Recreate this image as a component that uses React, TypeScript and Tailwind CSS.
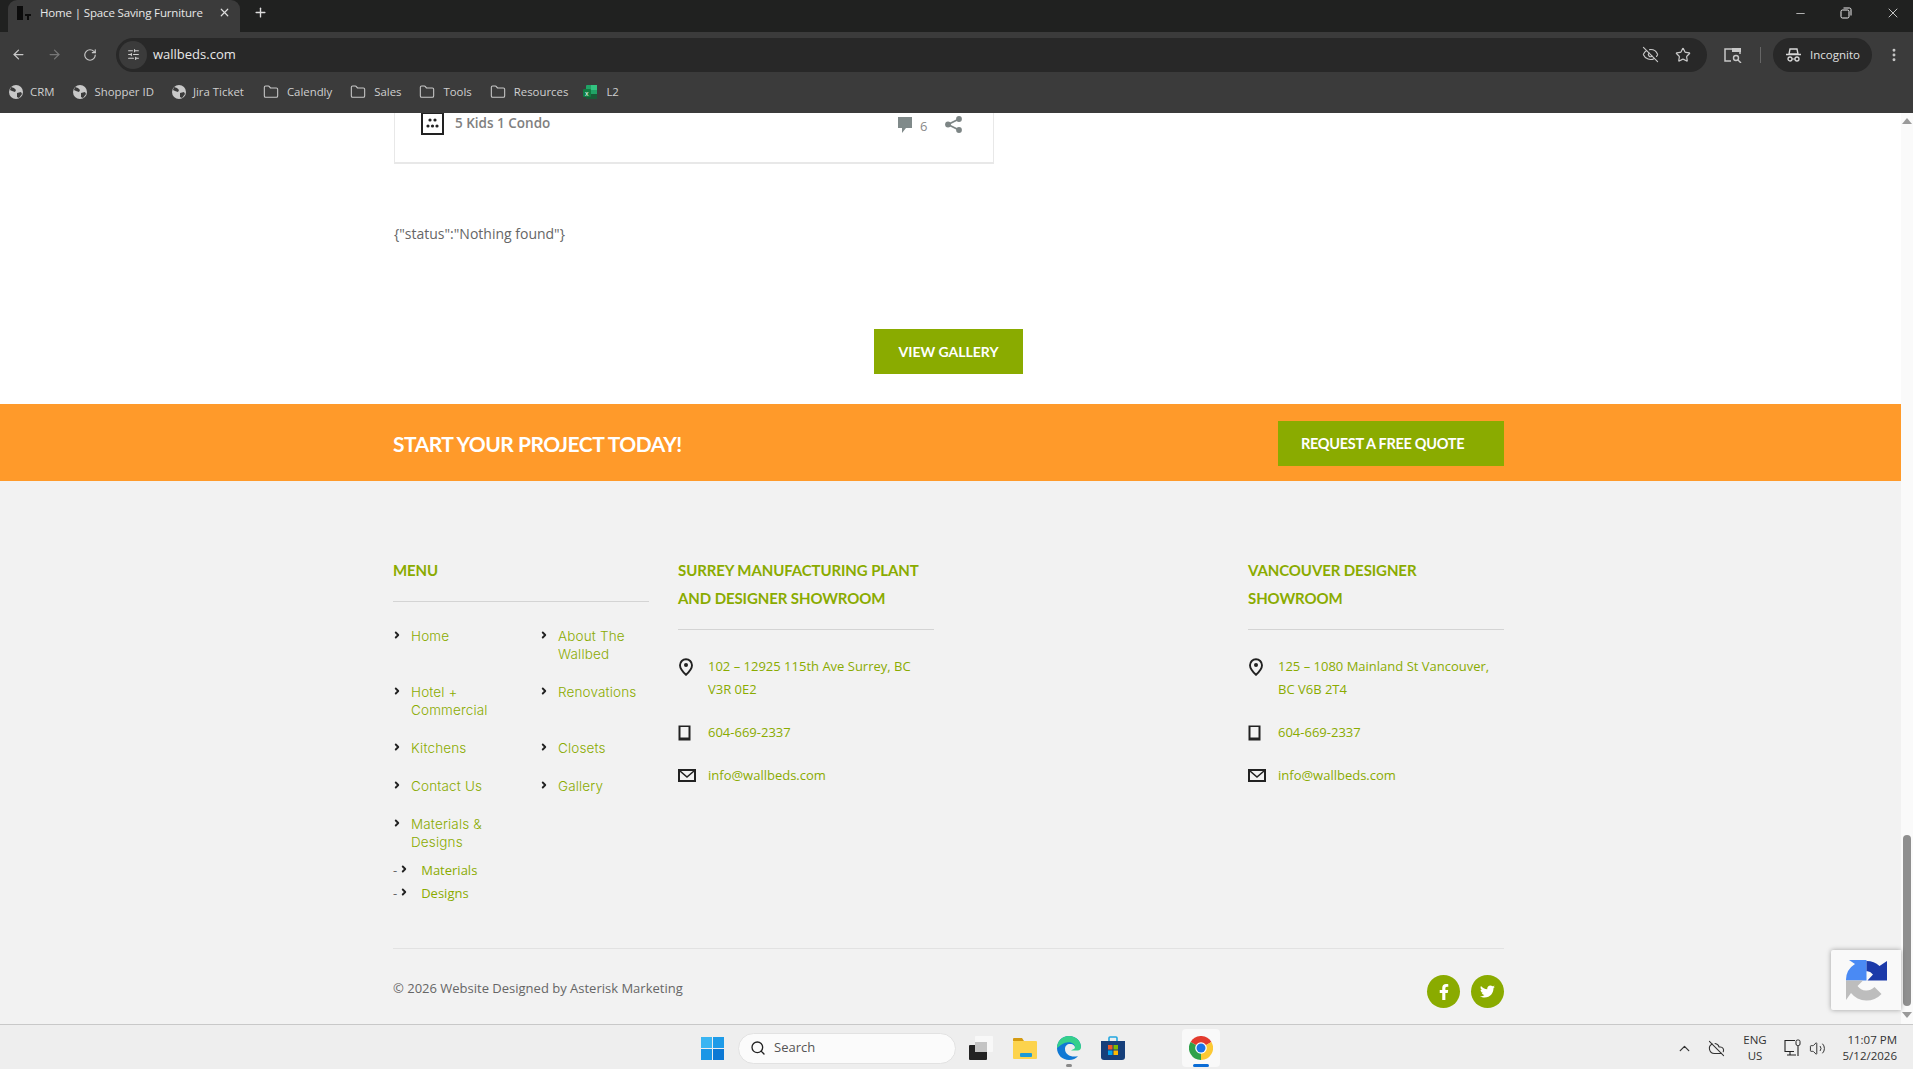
import React from "react";
import { ArrowLeft, ArrowRight, RotateCw, X, Plus, Minus, EyeOff, Star, MoreVertical, Search, ChevronUp, CloudOff, Volume2, Folder, ChevronRight, SlidersHorizontal } from "lucide-react";

const G = "text-[#8aab00]";

function Bookmark({ kind, label, gap }: { kind: "globe" | "folder" | "xl"; label: string; gap: number }) {
  return (
    <div className="flex items-center" style={{ marginRight: gap }}>
      {kind === "globe" && (
        <svg width="16" height="16" viewBox="0 0 16 16" className="mr-[6px]">
          <circle cx="8" cy="8" r="7" fill="#c8c8c8" />
          <path d="M3 3l3 1 2 2-1 2-3-1-2-1zM9 9l4-1 1 2-3 4-2-1z" fill="#3b3b3b" />
        </svg>
      )}
      {kind === "folder" && <Folder size={16} strokeWidth={1.6} className="mr-[8px] text-[#c8c8c8]" />}
      {kind === "xl" && (
        <svg width="14" height="16" viewBox="0 0 14 16" className="mr-[9px]">
          <rect x="3" y="1" width="11" height="14" rx="1" fill="#21a366" />
          <rect x="8" y="1" width="6" height="5" fill="#33c481" />
          <rect x="3" y="10" width="11" height="5" fill="#185c37" />
          <rect x="0" y="5" width="8" height="8" rx="1" fill="#107c41" />
          <text x="2" y="12" fontSize="7" fill="#fff" fontFamily="Liberation Sans">x</text>
        </svg>
      )}
      <span>{label}</span>
    </div>
  );
}

function MenuItem({ label, sub, h, w }: { label: string; sub?: boolean; h: number; w?: number }) {
  return (
    <li className="flex items-start" style={{ height: h }}>
      {sub && <span className="mr-[3px] text-[13px] leading-[18px] text-[#666]">-</span>}
      <ChevronRight size={10} strokeWidth={4.5} className="-ml-[1px] mt-[3px] shrink-0 text-[#222]" />
      <span
        className={`leading-[18px] ${sub ? "ml-[12px] text-[13px]" : "ml-[9px] text-[13.5px] font-light tracking-[0.15px]"} ${G}`}
        style={{ fontFamily: sub ? "'Open Sans', sans-serif" : "Inter, sans-serif", width: w }}
      >
        {label}
      </span>
    </li>
  );
}

function Contact({ address }: { address: React.ReactNode }) {
  return (
    <div className="mt-[25px] w-[256px]" style={{ fontFamily: "'Open Sans', sans-serif" }}>
      <div className="flex items-start">
        <div className="w-[30px] shrink-0">
          <svg width="16" height="18" viewBox="0 0 16 18" className="mt-[3px]">
            <path d="M8 1.200a6 6 0 0 0-6 6c0 4 6 9.600 6 9.600s6-5.600 6-9.600a6 6 0 0 0-6-6z" fill="none" stroke="#222" strokeWidth="1.9" />
            <circle cx="8" cy="7" r="2" fill="#222" />
          </svg>
        </div>
        <div className={`text-[13px] leading-[23px] ${G}`}>{address}</div>
      </div>
      <div className="mt-[20px] flex items-center">
        <div className="w-[30px] shrink-0">
          <svg width="13" height="16" viewBox="0 0 13 16" className="mt-[1px]">
            <rect x="0.500" y="0.500" width="12" height="15" fill="#222" />
            <rect x="2.500" y="2" width="8" height="10.500" fill="#f2f2f2" />
          </svg>
        </div>
        <span className={`text-[13px] leading-[23px] ${G}`}>604-669-2337</span>
      </div>
      <div className="mt-[20px] flex items-center">
        <div className="w-[30px] shrink-0">
          <svg width="18" height="13" viewBox="0 0 18 13">
            <rect x="1" y="1" width="16" height="11" fill="none" stroke="#222" strokeWidth="2" />
            <path d="M2 2l7 6 7-6" fill="none" stroke="#222" strokeWidth="1.600" />
          </svg>
        </div>
        <span className={`text-[13px] leading-[23px] ${G}`}>info@wallbeds.com</span>
      </div>
    </div>
  );
}

function Heading({ lines }: { lines: string[] }) {
  return (
    <div className="border-b border-[#d4d4d4] pb-[17px]">
      {lines.map((l) => (
        <div key={l} className={`text-[15px] font-bold leading-[28px] tracking-[-0.1px] ${G}`} style={{ fontFamily: "Lato, sans-serif" }}>{l}</div>
      ))}
    </div>
  );
}

export default function App() {
  return (
    <div className="relative flex h-screen w-full flex-col overflow-hidden bg-white" style={{ fontFamily: "'Open Sans', sans-serif" }}>
      {/* tab strip */}
      <div className="flex h-[32px] shrink-0 items-end bg-[#202120] text-white">
        <div className="ml-[8px] flex h-[32px] w-[232px] items-center rounded-t-[9px] bg-[#3b3b3b] pb-[7px] pl-[9px]">
          <svg width="14" height="16" viewBox="0 0 14 16">
            <rect x="0" y="1" width="6" height="14" fill="#0c0c0c" />
            <path d="M8 9h6v2h-2v4h-2v-4H8z" fill="#0c0c0c" />
          </svg>
          <span className="ml-[9px] w-[164px] whitespace-nowrap text-[11.5px] tracking-[-0.15px] text-[#e8e8e8]">Home | Space Saving Furniture</span>
          <X size={13} strokeWidth={2.2} className="ml-[14px] text-[#dddddd]" />
        </div>
        <Plus size={15} strokeWidth={2.2} className="mb-[12px] ml-[13px] text-[#dddddd]" />
        <div className="mb-[11px] ml-auto flex items-center">
          <Minus size={13} strokeWidth={1.2} className="mr-[33px] text-white" />
          <svg width="12" height="12" viewBox="0 0 12 12" className="mr-[33px]">
            <rect x="1" y="3" width="8" height="8" rx="1.500" fill="none" stroke="#eee" />
            <path d="M3.500 1h6a1.500 1.500 0 0 1 1.500 1.500v6" fill="none" stroke="#eee" />
          </svg>
          <X size={16} strokeWidth={1.1} className="mr-[12px] text-white" />
        </div>
      </div>

      {/* toolbar */}
      <div className="flex h-[40px] shrink-0 items-center bg-[#3b3b3b] pb-[1px] pt-[6px]">
        <ArrowLeft size={15} strokeWidth={2} className="ml-[11px] text-[#c8c8c8]" />
        <ArrowRight size={15} strokeWidth={2} className="ml-[21px] text-[#777]" />
        <RotateCw size={14} strokeWidth={2} className="ml-[21px] text-[#c8c8c8]" />
        <div className="ml-[19px] flex h-[34px] w-[1591px] items-center rounded-full bg-[#282828] pl-[3px]">
          <div className="flex h-[28px] w-[28px] items-center justify-center rounded-full bg-[#3b3b3b]">
            <SlidersHorizontal size={13} className="text-[#d0d0d0]" />
          </div>
          <span className="ml-[6px] text-[13px] text-[#e8e8e8]">wallbeds.com</span>
          <EyeOff size={17} strokeWidth={1.6} className="ml-auto text-[#c8c8c8]" />
          <Star size={16} strokeWidth={1.8} className="ml-[16px] mr-[16px] text-[#c8c8c8]" />
        </div>
        <svg width="18" height="16" viewBox="0 0 18 16" className="ml-[17px]">
          <path d="M7 14H1V2h15v5" fill="none" stroke="#c8c8c8" strokeWidth="1.500" />
          <rect x="8" y="1" width="9" height="4" fill="#c8c8c8" />
          <circle cx="12" cy="11" r="2.500" fill="none" stroke="#c8c8c8" strokeWidth="1.400" />
          <path d="M14 13l3 3" stroke="#c8c8c8" strokeWidth="1.400" />
        </svg>
        <div className="ml-[18px] h-[16px] w-[1px] bg-[#666]" />
        <div className="ml-[12px] flex h-[34px] w-[99px] items-center rounded-full bg-[#282828] pl-[13px]">
          <svg width="15" height="14" viewBox="0 0 15 14">
            <path d="M4 1h7l1 5H3zM0 6.500h15" fill="none" stroke="#d8d8d8" strokeWidth="1.400" />
            <circle cx="4" cy="11" r="2" fill="none" stroke="#d8d8d8" strokeWidth="1.300" />
            <circle cx="11" cy="11" r="2" fill="none" stroke="#d8d8d8" strokeWidth="1.300" />
            <path d="M6 11h3" stroke="#d8d8d8" />
          </svg>
          <span className="ml-[9px] text-[11.5px] text-[#e0e0e0]">Incognito</span>
        </div>
        <MoreVertical size={16} strokeWidth={2.4} className="ml-[14px] text-[#c8c8c8]" />
      </div>

      {/* bookmarks */}
      <div className="flex h-[41px] shrink-0 items-center bg-[#3b3b3b] pb-[1px] pl-[8px] text-[11.4px] text-[#cfcfcf]">
        <Bookmark kind="globe" label="CRM" gap={18} />
        <Bookmark kind="globe" label="Shopper ID" gap={17} />
        <Bookmark kind="globe" label="Jira Ticket" gap={19} />
        <Bookmark kind="folder" label="Calendly" gap={18} />
        <Bookmark kind="folder" label="Sales" gap={18} />
        <Bookmark kind="folder" label="Tools" gap={18} />
        <Bookmark kind="folder" label="Resources" gap={15} />
        <Bookmark kind="xl" label="L2" gap={0} />
      </div>

      {/* page */}
      <div className="flex min-h-0 flex-1">
        <main className="flex min-w-0 flex-1 flex-col">
          <div className="ml-[394px] h-[51px] w-[600px] shrink-0 border-x border-b-2 border-[#e8e8e8] pl-[26px]">
            <div className="flex items-start">
              <svg width="23" height="22" viewBox="0 0 23 22" className="shrink-0">
                <rect x="1" y="0" width="21" height="21" fill="#fff" stroke="#222" strokeWidth="2" />
                <g fill="#222">
                  <circle cx="9" cy="7" r="1.600" /><circle cx="14" cy="7" r="1.600" />
                  <circle cx="7" cy="13" r="1.600" /><circle cx="11.500" cy="13" r="1.600" /><circle cx="16" cy="13" r="1.600" />
                </g>
              </svg>
              <span className="ml-[11px] w-[98px] whitespace-nowrap text-[13.5px] font-semibold leading-[20px] text-[#808080]">5 Kids 1 Condo</span>
              <svg width="16" height="17" viewBox="0 0 16 17" className="ml-[344px] mt-[4px] shrink-0">
                <path d="M1 0h14v11H9l-4 5v-5H1z" fill="#808a8a" />
              </svg>
              <span className="ml-[7px] mt-[4px] text-[13px] leading-[18px] text-[#8a8a8a]">6</span>
              <svg width="17" height="17" viewBox="0 0 17 17" className="ml-[18px] mt-[3px] shrink-0">
                <g fill="#7d8585"><circle cx="14" cy="3" r="2.900" /><circle cx="3" cy="8.500" r="2.900" /><circle cx="14" cy="14" r="2.900" /></g>
                <path d="M14 3L3 8.500 14 14" fill="none" stroke="#7d8585" strokeWidth="1.800" />
              </svg>
            </div>
          </div>
          <div className="ml-[394px] mt-[60px] text-[14px] leading-[20px] text-[#666]">{'{"status":"Nothing found"}'}</div>
          <div className="ml-[874px] mt-[85px] flex h-[45px] w-[149px] items-center justify-center bg-[#8aab00] text-[14px] font-bold text-white" style={{ fontFamily: "Lato, sans-serif" }}>VIEW GALLERY</div>
          <div className="mt-[30px] flex h-[77px] shrink-0 items-center justify-between bg-[#ff9a2a] pl-[393px] pr-[397px] pt-[2px]" style={{ fontFamily: "Lato, sans-serif" }}>
            <span className="text-[21px] font-bold leading-[28px] tracking-[-0.5px] text-white">START YOUR PROJECT TODAY!</span>
            <div className="flex h-[45px] w-[226px] items-center bg-[#8aab00] pl-[23px] text-[14.5px] font-bold tracking-[-0.3px] text-white">REQUEST A FREE QUOTE</div>
          </div>
          <footer className="flex min-h-0 flex-1 flex-col bg-[#f2f2f2] pl-[393px]">
            <div className="mt-[75px] flex h-[392px] shrink-0 items-start">
              <div className="w-[256px]">
                <Heading lines={["MENU"]} />
                <div className="mt-[25px] flex">
                  <ul className="w-[147px] shrink-0">
                    <MenuItem label="Home" h={56} w={100} />
                    <MenuItem label="Hotel + Commercial" h={56} w={90} />
                    <MenuItem label="Kitchens" h={38} w={100} />
                    <MenuItem label="Contact Us" h={38} w={100} />
                    <MenuItem label="Materials & Designs" h={46} w={90} />
                    <MenuItem label="Materials" sub h={23} />
                    <MenuItem label="Designs" sub h={23} />
                  </ul>
                  <ul className="flex-1">
                    <MenuItem label="About The Wallbed" h={56} w={90} />
                    <MenuItem label="Renovations" h={56} />
                    <MenuItem label="Closets" h={38} />
                    <MenuItem label="Gallery" h={38} />
                  </ul>
                </div>
              </div>
              <div className="ml-[29px] w-[256px]">
                <Heading lines={["SURREY MANUFACTURING PLANT", "AND DESIGNER SHOWROOM"]} />
                <Contact address={<>102 – 12925 115th Ave Surrey, BC<br />V3R 0E2</>} />
              </div>
              <div className="ml-[314px] w-[256px]">
                <Heading lines={["VANCOUVER DESIGNER", "SHOWROOM"]} />
                <Contact address={<>125 – 1080 Mainland St Vancouver,<br />BC V6B 2T4</>} />
              </div>
            </div>
            <div className="w-[1111px] border-t border-[#e2e2e2]" />
            <div className="mt-[26px] flex w-[1111px] items-start">
              <span className="mt-[3px] text-[13px] leading-[20px] text-[#666]">© 2026 Website Designed by Asterisk Marketing</span>
              <div className="ml-auto flex gap-[11px]">
                <div className="flex h-[33px] w-[33px] items-center justify-center rounded-full bg-[#8aab00]">
                  <svg width="10" height="18" viewBox="0 0 320 512" fill="#fff"><path d="M279 288l14-93h-89v-60c0-25 12-50 52-50h41V6s-37-6-72-6c-73 0-121 44-121 125v70H23v93h81v224h100V288z" /></svg>
                </div>
                <div className="flex h-[33px] w-[33px] items-center justify-center rounded-full bg-[#8aab00]">
                  <svg width="17" height="15" viewBox="0 0 512 512" fill="#fff"><path d="M459 152c0 5 0 9 0 14 0 139-106 299-299 299-59 0-115-17-161-47 8 1 16 1 25 1 49 0 94-17 130-45-46-1-85-31-98-73 7 1 13 2 20 2 9 0 19-1 27-4-48-10-84-52-84-103v-1c14 8 30 13 47 13-28-19-47-51-47-87 0-20 5-37 14-53 52 63 129 105 216 109-2-8-3-16-3-24 0-58 47-105 105-105 30 0 58 13 77 33 24-5 47-14 67-26-8 25-25 46-46 59 21-2 42-8 60-16-14 21-32 39-53 54z" /></svg>
                </div>
              </div>
            </div>
          </footer>
        </main>
        {/* scrollbar */}
        <div className="flex w-[12px] shrink-0 flex-col items-center bg-[#fafafa]">
          <div className="mt-[5px] h-0 w-0 border-x-[5px] border-b-[6px] border-x-transparent border-b-[#9a9a9a]" />
          <div className="mt-[711px] h-[171px] w-[8px] rounded-full bg-[#8f8f8f]" />
          <div className="mt-[6px] h-0 w-0 border-x-[5px] border-t-[6px] border-x-transparent border-t-[#9a9a9a]" />
        </div>
      </div>

      {/* taskbar */}
      <div className="flex h-[45px] shrink-0 items-center border-t border-[#c8c8c8] bg-[#eeeeee] pt-[2px]">
        <svg width="23" height="23" viewBox="0 0 23 23" className="ml-[701px] shrink-0">
          <rect x="0" y="0" width="11" height="11" fill="#3ab5f2" /><rect x="12" y="0" width="11" height="11" fill="#1e9be8" />
          <rect x="0" y="12" width="11" height="11" fill="#1a96e6" /><rect x="12" y="12" width="11" height="11" fill="#0c78d4" />
        </svg>
        <div className="ml-[14px] flex h-[31px] w-[218px] shrink-0 items-center rounded-full border border-[#e2e2e2] bg-[#fbfbfb] pl-[11px] text-[13px] text-[#555]">
          <Search size={16} strokeWidth={2} className="text-[#222]" />
          <span className="ml-[8px]">Search</span>
        </div>
        <svg width="24" height="24" viewBox="0 0 24 24" className="ml-[13px] shrink-0">
          <rect x="0" y="9" width="18" height="15" rx="1" fill="#222" />
          <rect x="6" y="0" width="18" height="16" rx="1" fill="#f8f8f8" />
          <rect x="6" y="6" width="12" height="10" fill="#c4c4c4" />
        </svg>
        <svg width="24" height="22" viewBox="0 0 24 22" className="ml-[20px] shrink-0">
          <path d="M0 2a1 1 0 0 1 1-1h8l2 3H0z" fill="#d49a10" />
          <rect x="0" y="4" width="24" height="18" rx="1" fill="#fcd34d" />
          <rect x="7" y="16" width="12" height="4" rx="1" fill="#1a9ad8" />
        </svg>
        <div className="relative ml-[20px] h-[24px] w-[24px] shrink-0">
          <svg width="24" height="24" viewBox="0 0 24 24">
            <path d="M12 0C5 0 0 5.500 0 12c0 7 5.500 12 12 12 4 0 7-1.500 9-4-6 2-13-1-13-7 0-3 2-5 5-5 3.500 0 5 2 5 3.500h6C24 5 19 0 12 0z" fill="#0f78d4" />
            <path d="M12 0c7 0 12 5 12 11 0 2-1 3.500-3.500 3.500H14c1-1 4-1 4-3.500 0-3-4-5.500-8-4.500C5 7 2 11 0 12 0 5.500 5 0 12 0z" fill="#35d08a" />
          </svg>
          <div className="absolute left-[9px] top-[28px] h-[3px] w-[6px] rounded-full bg-[#8a8a8a]" />
        </div>
        <svg width="24" height="24" viewBox="0 0 24 24" className="ml-[20px] shrink-0">
          <path d="M8 5V2a1 1 0 0 1 1-1h6a1 1 0 0 1 1 1v3" fill="none" stroke="#22a7e0" strokeWidth="1.600" />
          <path d="M0 5h24v16a3 3 0 0 1-3 3H3a3 3 0 0 1-3-3z" fill="#163f7a" />
          <rect x="7" y="9" width="4.500" height="4.500" fill="#ef5a28" /><rect x="12.500" y="9" width="4.500" height="4.500" fill="#7fba00" />
          <rect x="7" y="14.500" width="4.500" height="4.500" fill="#00a4ef" /><rect x="12.500" y="14.500" width="4.500" height="4.500" fill="#ffb900" />
        </svg>
        <div className="relative ml-[57px] flex h-[38px] w-[38px] shrink-0 items-center justify-center rounded-[4px] bg-[#f9f9f9]">
          <svg width="24" height="24" viewBox="0 0 24 24">
            <path d="M12 12L22.400 6A12 12 0 0 0 1.600 6z" fill="#e33b2e" />
            <path d="M12 12L1.600 6A12 12 0 0 0 12 24z" fill="#2fa14a" />
            <path d="M12 12L12 24A12 12 0 0 0 22.400 6z" fill="#fcc934" />
            <circle cx="12" cy="12" r="5.800" fill="#fff" /><circle cx="12" cy="12" r="4.500" fill="#1a73e8" />
          </svg>
          <div className="absolute bottom-[0px] left-[11px] h-[3px] w-[16px] rounded-full bg-[#0a6cd6]" />
        </div>
        <ChevronUp size={17} strokeWidth={1.8} className="ml-[456px] shrink-0 text-[#333]" />
        <CloudOff size={17} strokeWidth={1.5} className="ml-[15px] shrink-0 text-[#333]" />
        <div className="ml-[14px] w-[32px] shrink-0 text-center text-[11.5px] leading-[16px] text-[#333]">ENG<br />US</div>
        <svg width="18" height="18" viewBox="0 0 18 18" className="ml-[13px] shrink-0">
          <path d="M10 12.500H1V1.500h10" fill="none" stroke="#222" strokeWidth="1.100" />
          <path d="M6 12.500v3M3 16h9" fill="none" stroke="#222" strokeWidth="1.100" />
          <rect x="12" y="1" width="4" height="5.500" rx="1.500" fill="none" stroke="#222" strokeWidth="1" />
          <path d="M14 6.500V17" stroke="#222" strokeWidth="1.100" />
        </svg>
        <Volume2 size={17} strokeWidth={1.4} className="ml-[7px] shrink-0 text-[#333]" />
        <div className="ml-[15px] w-[56px] shrink-0 whitespace-nowrap text-right text-[11.5px] leading-[16px] text-[#333]">11:07 PM<br />5/12/2026</div>
      </div>

      {/* recaptcha overlay */}
      <div className="absolute left-[1831px] top-[950px] flex h-[60px] w-[70px] items-center rounded-l-[2px] bg-[#f9f9f9] pl-[15px] shadow-[0_0_5px_rgba(0,0,0,0.35)]">
        <svg width="41" height="41" viewBox="0 0 41 41">
          <path d="M0 20.500A19 19 0 0 1 9 4L3 0h17.500v20.500H11a9.500 9.500 0 0 1 9.500-9.500v9.500z" fill="#4a8af4" />
          <path d="M20.500 1a19 19 0 0 1 13 5L41 1v19.500H21.500L27 14.500A9 9 0 0 0 20.500 11z" fill="#1c3aa9" />
          <path d="M0 20.500h17L11.500 26a11 11 0 0 0 17 1l7 7A20 20 0 0 1 5 33l-5 7z" fill="#bdbdbd" />
        </svg>
      </div>
    </div>
  );
}
